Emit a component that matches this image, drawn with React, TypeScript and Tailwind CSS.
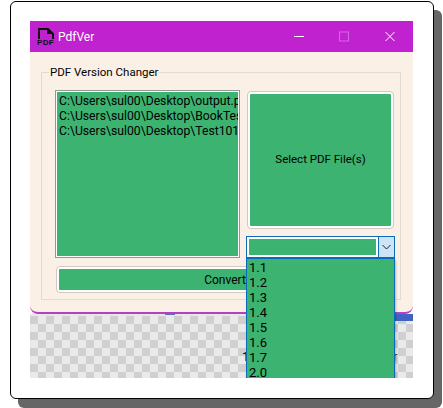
const versions = ["1.1", "1.2", "1.3", "1.4", "1.5", "1.6", "1.7", "2.0"];

const files = [
  "C:\\Users\\sul00\\Desktop\\output.pdf",
  "C:\\Users\\sul00\\Desktop\\BookTest.pdf",
  "C:\\Users\\sul00\\Desktop\\Test101.pdf",
];

const PdfIcon = () => (
  <div className="flex w-[17px] flex-col items-center">
    <svg width="16" height="11" viewBox="0 0 16 11">
      <path d="M1 11V1h9l5 5v5" fill="none" stroke="#111" strokeWidth="2" />
      <path d="M9 0l7 6H9z" fill="#111" />
    </svg>
    <span className="mt-px text-[8px] leading-[6px] font-black tracking-[0.4px] text-[#111] font-['Liberation_Sans',sans-serif]">
      PDF
    </span>
  </div>
);

export default function App() {
  return (
    <div className="h-[408px] w-[443px] overflow-hidden bg-white pl-[10px] pt-px font-['Roboto',sans-serif]">
      <div className="h-[398px] w-[424px] rounded-md border border-black bg-white px-[19px] pt-[19px] shadow-[8px_9px_0_#666]">
        <div className="relative h-[357px] w-[383px] overflow-hidden">
          {/* title bar */}
          <div className="flex h-[31px] items-center bg-[#c022d0] pl-[7px] text-white">
            <PdfIcon />
            <span className="ml-1 text-xs">PdfVer</span>
            <svg width="101" height="11" viewBox="0 0 101 11" className="ml-auto mr-[18px]">
              <path d="M0 5.5h10" stroke="#fff" strokeWidth="1" />
              <rect x="45.5" y="1" width="9" height="9" fill="none" stroke="#d867e2" />
              <path d="M91.5 1l9 9M100.5 1l-9 9" stroke="#fff" strokeWidth="1" />
            </svg>
          </div>

          {/* form */}
          <div className="h-[262px] rounded-b-lg border-b-2 border-[#b640c4] bg-[#faf0e6] px-[11px] pt-5 text-xs text-black">
            <div className="relative h-[228px] w-[360px] border border-[#e2dbd3] pl-[13px] pt-[17px]">
              <span className="absolute left-[7px] top-[-9px] bg-[#faf0e6] px-px text-[11.5px] leading-4">PDF Version Changer</span>
              <div className="flex items-start">
                <div className="h-[168px] w-[185px] overflow-hidden border border-[#8f9a94] bg-[#3cb371] outline outline-1 -outline-offset-2 outline-white pl-[3px] pt-[3px] text-[12.2px] leading-[15px] whitespace-nowrap">
                  {files.map((f) => (
                    <div key={f}>{f}</div>
                  ))}
                </div>
                <button className="ml-2 mt-0.5 h-[136px] w-[145px] rounded-[3px] border-2 border-white bg-[#3cb371] text-[11.5px] outline outline-1 outline-[#cfc9c3]">
                  Select PDF File(s)
                </button>
              </div>
              <button className="ml-0.5 mt-[9px] h-[25px] w-[336px] rounded-[3px] border-2 border-white bg-[#3cb371] outline outline-1 outline-[#cfc9c3]">
                Convert
              </button>

              {/* combo with its list open */}
              <div className="absolute left-[204px] top-[163px] z-10 w-[149px]">
                <div className="flex h-[23px] border border-b-2 border-[#0a6cb8] bg-white">
                  <div className="m-0.5 flex-1 bg-[#3cb371]" />
                  <div className="flex w-4 items-center justify-center border-l border-[#0a6cb8] bg-[#cde4f7]">
                    <svg width="9" height="6" viewBox="0 0 9 6">
                      <path d="M.5 1l4 4 4-4" fill="none" stroke="#222" strokeWidth="1" />
                    </svg>
                  </div>
                </div>
                <div className="h-[140px] border-x border-[#0a6cb8] bg-[#3cb371] pl-0.5 pt-px text-[13px] leading-[15px] shadow-[1px_1px_2px_rgba(0,0,0,0.25)]">
                  {versions.map((v) => (
                    <div key={v}>{v}</div>
                  ))}
                </div>
              </div>
            </div>
          </div>

          {/* transparency checker behind the window */}
          <div className="relative h-[64px] bg-[conic-gradient(#cfcfcf_25%,#eaeaea_0_50%,#cfcfcf_0_75%,#eaeaea_0)] bg-[length:16px_16px] bg-[position:-8px_2px]">
            <div className="h-[2px] bg-[#e8e8e8]" />
            <div className="absolute left-[135px] top-0 h-px w-[10px] bg-[#5a74b8]" />
            <div className="absolute right-0 top-0 h-[7px] w-[18px] bg-[#3f63c4]" />
            <span className="absolute left-[212px] top-[35px] text-[13px] leading-4 text-black">1</span>
            <span className="absolute left-[363px] top-[35px] text-[13px] leading-4 text-[#1a3a6a]">r</span>
          </div>
        </div>
      </div>
    </div>
  );
}
